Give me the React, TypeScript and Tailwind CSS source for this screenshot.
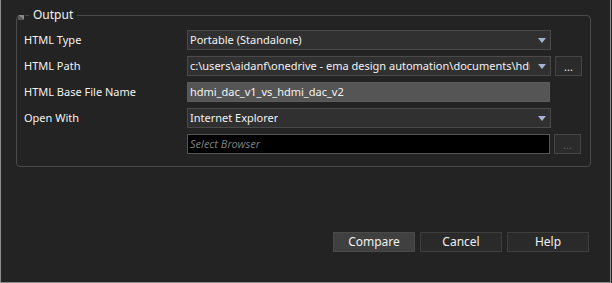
import React from 'react';

const font = { fontFamily: '"Noto Sans", "Open Sans", sans-serif' };

const Arrow = () => (
  <svg width="8" height="5" viewBox="0 0 8 5" className="shrink-0">
    <polygon points="0,0 8,0 4,5" fill="#a4b3d3" />
  </svg>
);

const Combo: React.FC<{ value: string }> = ({ value }) => (
  <div className="flex h-[20px] w-[364px] items-center justify-between border border-[#4a4a4a] bg-[#303030] pl-[2px] pr-[4px]">
    <span className="overflow-hidden whitespace-nowrap text-[11px] text-[#f2f2f2]">{value}</span>
    <div className="pl-2"><Arrow /></div>
  </div>
);

const DotsButton: React.FC<{ disabled?: boolean }> = ({ disabled }) => (
  <div
    className={`flex h-[20px] w-[27px] items-center justify-center border border-[#454545] bg-[#2b2b2b] text-[11px] leading-none ${
      disabled ? 'text-[#5e5e5e]' : 'text-[#f0f0f0]'
    }`}
  >
    ...
  </div>
);

const Row: React.FC<{ label?: string; children: React.ReactNode }> = ({ label, children }) => (
  <div className="flex h-[20px] items-center">
    <div className="w-[163px] text-[11px] text-[#f2f2f2]">{label}</div>
    <div className="flex items-center gap-[4px]">{children}</div>
  </div>
);

const Btn: React.FC<{ label: string; primary?: boolean }> = ({ label, primary }) => (
  <div
    className={`flex h-[20px] w-[82px] items-center justify-center border text-[12px] text-[#f0f0f0] ${
      primary ? 'border-[#4a4a4a] bg-[#404040]' : 'border-[#3e3e3e] bg-[#2a2a2a]'
    }`}
  >
    {label}
  </div>
);

export default function App() {
  return (
    <div className="h-[283px] w-[612px] bg-[#222322]" style={font}>
      <div className="flex h-[283px] w-[611px] flex-col border-b border-l border-r border-[#8c8c8c] bg-[#222322]">
        <div className="relative ml-[15px] mt-[15px] h-[152px] w-[575px] rounded-[4px] border border-[#4a4a4a]">
          <div className="absolute left-[1px] top-[-1px] bg-[#222322]">
            <svg width="7" height="6" viewBox="0 0 7 6">
              <polygon points="0,0 6,0 6,5" fill="#8a8a8a" />
              <polygon points="0,0 6,5 0,5" fill="#5a5a5a" />
            </svg>
          </div>
          <div className="absolute left-[12px] top-[-10px] bg-[#222322] px-[4px] text-[12px] leading-[18px] text-[#f2f2f2]">
            Output
          </div>
          <div className="flex flex-col gap-[6px] pl-[7px] pt-[14px]">
            <Row label="HTML Type">
              <Combo value="Portable (Standalone)" />
            </Row>
            <Row label="HTML Path">
              <Combo value="c:\users\aidanf\onedrive - ema design automation\documents\hdmi_dac_compare" />
              <DotsButton />
            </Row>
            <Row label="HTML Base File Name">
              <div className="flex h-[20px] w-[363px] items-center border border-[#5c5c5c] bg-[#555555] pl-[2px] text-[11px] text-[#f4f4f4]">
                hdmi_dac_v1_vs_hdmi_dac_v2
              </div>
            </Row>
            <Row label="Open With">
              <Combo value="Internet Explorer" />
            </Row>
            <Row>
              <div className="flex h-[20px] w-[363px] items-center border border-[#555555] bg-black pl-[2px] text-[11px] italic text-[#7a7a7a]">
                Select Browser
              </div>
              <DotsButton disabled />
            </Row>
          </div>
        </div>
        <div className="mr-[21px] mt-[65px] flex justify-end gap-[5px]">
          <Btn label="Compare" primary />
          <Btn label="Cancel" />
          <Btn label="Help" />
        </div>
      </div>
    </div>
  );
}
